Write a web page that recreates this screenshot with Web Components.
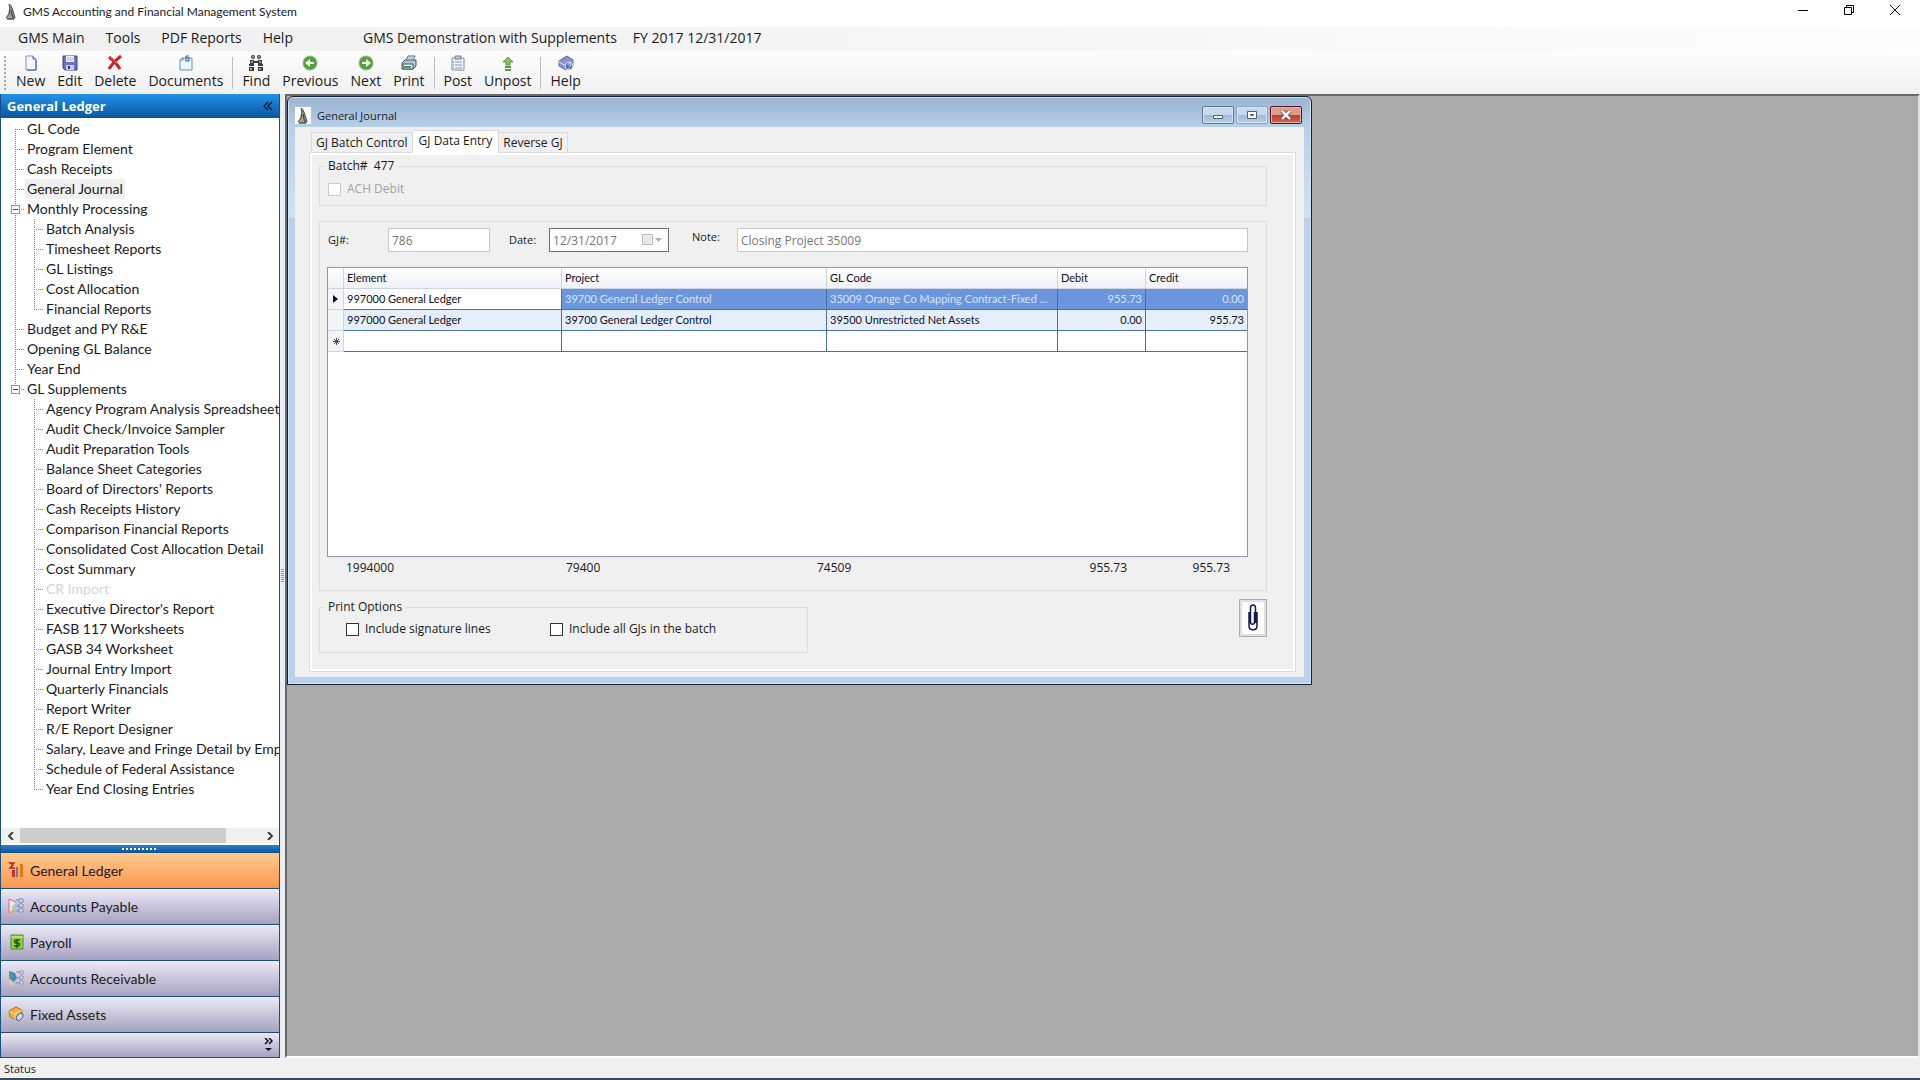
<!DOCTYPE html>
<html lang="en">
<head>
<meta charset="utf-8">
<title>GMS Accounting and Financial Management System</title>
<style>
    html, body {
        height: 100%;
        margin: 0;
    }

    body {
        font-family: "Open Sans", "Noto Sans", sans-serif;
        font-size: 12px;
        color: #1a1a1a;
        overflow: hidden;
    }
</style>
</head>
<body>
<app-shell>
    <title-bar slot="top">GMS Accounting and Financial Management System</title-bar>
    <menu-bar slot="top" company="GMS Demonstration with Supplements" period="FY 2017 12/31/2017"></menu-bar>
    <tool-bar slot="top">
        <tool-button icon="new">New</tool-button>
        <tool-button icon="edit">Edit</tool-button>
        <tool-button icon="delete">Delete</tool-button>
        <tool-button icon="documents">Documents</tool-button>
        <tool-separator></tool-separator>
        <tool-button icon="find">Find</tool-button>
        <tool-button icon="previous">Previous</tool-button>
        <tool-button icon="next">Next</tool-button>
        <tool-button icon="print">Print</tool-button>
        <tool-separator></tool-separator>
        <tool-button icon="post">Post</tool-button>
        <tool-button icon="unpost">Unpost</tool-button>
        <tool-separator></tool-separator>
        <tool-button icon="help">Help</tool-button>
    </tool-bar>

    <side-pane slot="side" heading="General Ledger">
        <tree-node label="GL Code" first></tree-node>
        <tree-node label="Program Element"></tree-node>
        <tree-node label="Cash Receipts"></tree-node>
        <tree-node label="General Journal" selected></tree-node>
        <tree-node label="Monthly Processing" branch>
            <tree-node label="Batch Analysis"></tree-node>
            <tree-node label="Timesheet Reports"></tree-node>
            <tree-node label="GL Listings"></tree-node>
            <tree-node label="Cost Allocation"></tree-node>
            <tree-node label="Financial Reports" last></tree-node>
        </tree-node>
        <tree-node label="Budget and PY R&amp;E"></tree-node>
        <tree-node label="Opening GL Balance"></tree-node>
        <tree-node label="Year End"></tree-node>
        <tree-node label="GL Supplements" branch last>
            <tree-node label="Agency Program Analysis Spreadsheet"></tree-node>
            <tree-node label="Audit Check/Invoice Sampler"></tree-node>
            <tree-node label="Audit Preparation Tools"></tree-node>
            <tree-node label="Balance Sheet Categories"></tree-node>
            <tree-node label="Board of Directors' Reports"></tree-node>
            <tree-node label="Cash Receipts History"></tree-node>
            <tree-node label="Comparison Financial Reports"></tree-node>
            <tree-node label="Consolidated Cost Allocation Detail"></tree-node>
            <tree-node label="Cost Summary"></tree-node>
            <tree-node label="CR Import" disabled></tree-node>
            <tree-node label="Executive Director's Report"></tree-node>
            <tree-node label="FASB 117 Worksheets"></tree-node>
            <tree-node label="GASB 34 Worksheet"></tree-node>
            <tree-node label="Journal Entry Import"></tree-node>
            <tree-node label="Quarterly Financials"></tree-node>
            <tree-node label="Report Writer"></tree-node>
            <tree-node label="R/E Report Designer"></tree-node>
            <tree-node label="Salary, Leave and Fringe Detail by Emp"></tree-node>
            <tree-node label="Schedule of Federal Assistance"></tree-node>
            <tree-node label="Year End Closing Entries" last></tree-node>
        </tree-node>
        <module-button slot="modules" icon="ledger" active>General Ledger</module-button>
        <module-button slot="modules" icon="payable">Accounts Payable</module-button>
        <module-button slot="modules" icon="payroll">Payroll</module-button>
        <module-button slot="modules" icon="receivable">Accounts Receivable</module-button>
        <module-button slot="modules" icon="assets">Fixed Assets</module-button>
    </side-pane>

    <mdi-window heading="General Journal">
        <tab-panel tabs="GJ Batch Control|GJ Data Entry|Reverse GJ" current="1">
            <journal-form></journal-form>
        </tab-panel>
    </mdi-window>

    <status-bar slot="bottom">Status</status-bar>
</app-shell>

<script>
const person = `<svg width="12" height="18" viewBox="0 0 12 18">
    <path d="M4 1l2 0 1 3 1 4 2 6 0 2-3 0-5 0-1-1 2-4 1-5z" fill="#a8a39c"/>
    <path d="M4 1l1 5-1 5-3 4M6 3l2 5 2 7" fill="none" stroke="#4a4642" stroke-width="1"/>
    <path d="M6 7l1 5 2 4M2 16h7" fill="none" stroke="#55504b" stroke-width="1.500"/>
</svg>`;

const icons = {
    new: `<path d="M3 1h7l3 3v11H3z" fill="#f4f8fd" stroke="#7c94b4"/><path d="M10 1v3h3" fill="#c4d4e8" stroke="#4a6690"/><path d="M13 5v10H4" fill="none" stroke="#3e5f90"/>`,
    edit: `<path d="M1 1h14v14H3l-2-2z" fill="#6a72c4" stroke="#3a4090"/><path d="M4 1h8v6H4z" fill="#eef1fa"/><path d="M5 3h6M5 5h6" stroke="#aab2d8"/><path d="M4 10h8v5H4z" fill="#c8cce8"/><path d="M6 11h2v3H6z" fill="#30367c"/>`,
    delete: `<path d="M2 2c4 3 8 7 11 12M14 1C9 5 5 9 2 14" fill="none" stroke="#c8222a" stroke-width="3"/><path d="M3 2c3 2 5 4 7 7" fill="none" stroke="#ee7070"/>`,
    documents: `<path d="M4 3h10v12H2V5z" fill="#eaf4fd" stroke="#5e92bc"/><path d="M2 5h3V3" fill="none" stroke="#5e92bc"/><path d="M11 1H8v5h3V3H9" fill="none" stroke="#2c5c86"/>`,
    find: `<g fill="#3a3a3a"><circle cx="5" cy="2" r="2"/><circle cx="11" cy="2" r="2"/><path d="M2 5h4v4H2zM10 5h4v4h-4zM6 6h4v2H6zM1 9h5v2H1zM10 9h5v2h-5zM1 12h5v4H1zM10 12h5v4h-5z"/></g><path d="M3 13v2M12 13v2M4 6v2M12 6v2" stroke="#fff"/><circle cx="5" cy="2" r="1" fill="#aaa"/><circle cx="11" cy="2" r="1" fill="#aaa"/>`,
    previous: `<circle cx="8" cy="8" r="7" fill="#54a03c" stroke="#8cbc7c"/><path d="M3 8l5-4v3h4v2H8v3z" fill="#fff"/>`,
    next: `<circle cx="8" cy="8" r="7" fill="#54a03c" stroke="#8cbc7c"/><path d="M13 8L8 4v3H4v2h4v3z" fill="#fff"/>`,
    print: `<path d="M5 6l2-5h7l-2 5z" fill="#eef6fc" stroke="#4a6a8a"/><path d="M1 8l3-3h11v6l-3 3H1z" fill="#b4c4d0" stroke="#3c5468"/><path d="M2 9h10v5H2z" fill="#e8eef2" stroke="#3c5468"/><path d="M3 12h7" stroke="#30a040" stroke-width="2"/><path d="M7 3h5" stroke="#88a8c8"/>`,
    post: `<path d="M2 3h12v12H2z" fill="#f0f5fa" stroke="#7890ac"/><path d="M5 1h6v3H5z" fill="#c0ccda" stroke="#68809c"/><path d="M5 7h7M5 10h7M5 13h7" stroke="#7c98b8"/><path d="M3 7h1M3 10h1M3 13h1" stroke="#4c6c94"/>`,
    unpost: `<path d="M8 2l5 5h-3v3H6V7H3z" fill="#86c25c" stroke="#5e9c40"/><path d="M5 12h6M5 15h6" stroke="#5c9c44" stroke-width="2"/>`,
    help: `<path d="M1 6l8-5 6 4v5l-7 5-7-4z" fill="#8a92d0" stroke="#5a62a8"/><path d="M1 7l7 4 5-3" fill="none" stroke="#eef"/><circle cx="11" cy="11" r="4" fill="#4c6cc0" stroke="#dfe6f8"/><path d="M10 10c0-2 3-2 3 0 0 1-2 1-2 2M11 13v1" fill="none" stroke="#fff"/>`,
    ledger: `<path d="M7 1H2l3 2-3 3h5" fill="none" stroke="#b82818" stroke-width="1.500"/><path d="M4 8h3v7H4z" fill="#c83020"/><path d="M8 5h2v10H8z" fill="#8070a0"/><path d="M12 2h3v13h-3z" fill="#e07818"/>`,
    payable: `<path d="M1 1l7 3v8l-7 3z" fill="#f4e4e4" stroke="#d07070"/><path d="M4 9l4-5 3 4-2 6H4z" fill="#a8c4e0"/><path d="M1 15l4-4 3 3z" fill="#f0a848"/><path d="M11 1h4v3h-4zM11 6h4v3h-4zM11 11h4v3h-4zM8 2h3M9 8h2M8 13h3" fill="#e8eef8" stroke="#7088b0"/>`,
    payroll: `<path d="M3 1h12v14H3z" fill="#98cc48" stroke="#4c8c20"/><path d="M3 3h12" stroke="#d4ecb0"/><path d="M12 6H8c-2 0-2 3 0 3h2c2 0 2 3 0 3H6M9 5v9" fill="none" stroke="#1c5c14" stroke-width="1.500"/>`,
    receivable: `<path d="M1 1l6 2 2 5-3 4-5-4z" fill="#4888b8"/><path d="M1 1l4 6-4 2z" fill="#58a078"/><path d="M1 10l5 5H1z" fill="#f0c890"/><path d="M12 1h3v3h-3zM12 6h3v3h-3zM12 11h3v3h-3zM8 2h4M9 8h3M8 13h4" fill="#f0f2f6" stroke="#8890a0"/>`,
    assets: `<path d="M1 5l7-4 6 3v6l-6 4-6-3z" fill="#f0b040" stroke="#a87018"/><path d="M1 5l6 3 7-4M7 8v6" fill="none" stroke="#fce0a0"/><path d="M9 14l-1-3 4-4 3 1v3l-4 4z" fill="#c8d4e8" stroke="#4c6490"/>`
};

function svgIcon(name) {
    return `<svg width="16" height="16" viewBox="0 0 16 16" aria-hidden="true">${icons[name]}</svg>`;
}

// every element below renders once into an open shadow root
class BaseElement extends HTMLElement {
    constructor() {
        super();
        this.myRoot = this.attachShadow({ mode: "open" });
    }

    connectedCallback() {
        this.myRoot.innerHTML = `
        <style>
            * {
                box-sizing: border-box;
            }
            button, input {
                font: inherit;
                color: inherit;
                margin: 0;
            }
            button {
                background: none;
                border: 0;
                padding: 0;
            }
            svg {
                display: block;
            }
        </style>
        ${this.render()}`;
    }
}

class AppShell extends BaseElement {
    render() {
        return `
        <style>
            :host {
                display: flex;
                flex-direction: column;
                height: 100vh;
                background: #f0f0f0;
            }
            .work {
                flex: 1;
                display: flex;
                min-height: 0;
            }
            .side {
                display: flex;
                width: 280px;
                flex: none;
            }
            .grip {
                width: 5px;
                flex: none;
                display: flex;
                align-items: center;
                justify-content: center;
                background: #e9eef5;
            }
            .grip i {
                width: 3px;
                height: 14px;
                background: repeating-linear-gradient(#8c949e 0 1px, transparent 1px 2px);
            }
            .desktop {
                flex: 1;
                position: relative;
                min-width: 0;
                background: #ababab;
                border-top: 2px solid #696969;
                border-left: 2px solid #696969;
                border-bottom: 2px solid #ffffff;
                border-right: 2px solid #e3e3e3;
            }
        </style>
        <slot name="top"></slot>
        <div class="work">
            <div class="side"><slot name="side"></slot></div>
            <div class="grip"><i></i></div>
            <main class="desktop"><slot></slot></main>
        </div>
        <slot name="bottom"></slot>`;
    }
}

class TitleBar extends BaseElement {
    render() {
        return `
        <style>
            :host {
                display: flex;
                align-items: center;
                height: 27px;
                padding: 0 2px 4px 5px;
                box-sizing: border-box;
                background: #ffffff;
                font-family: Lato, sans-serif;
                font-size: 12px;
            }
            .text {
                flex: 1;
                margin-left: 6px;
            }
            button {
                width: 46px;
                height: 20px;
                display: flex;
                justify-content: center;
            }
            button svg {
                margin-top: 2px;
            }
        </style>
        ${person}
        <span class="text"><slot></slot></span>
        <button aria-label="Minimize"><svg width="12" height="12"><path d="M1 6.500h10" stroke="#000"/></svg></button>
        <button aria-label="Restore"><svg width="12" height="12"><path d="M1.500 3.500h7v7h-7zM3.500 3V1.500h7v7H9" fill="none" stroke="#000"/></svg></button>
        <button aria-label="Close"><svg width="12" height="12"><path d="M1 1l10 10M11 1L1 11" stroke="#000"/></svg></button>`;
    }
}

class MenuBar extends BaseElement {
    render() {
        return `
        <style>
            :host {
                display: flex;
                align-items: center;
                height: 24px;
                padding: 0 0 3px 18px;
                box-sizing: border-box;
                background: linear-gradient(to right, #f0f0f0, #fcfcfc);
                font-size: 14px;
                line-height: 20px;
            }
            nav {
                display: flex;
                gap: 21px;
                margin-right: 70px;
            }
            .company {
                margin-right: 16px;
            }
        </style>
        <nav>
            <button>GMS Main</button>
            <button>Tools</button>
            <button>PDF Reports</button>
            <button>Help</button>
        </nav>
        <span class="company">${this.getAttribute("company")}</span>
        <span>${this.getAttribute("period")}</span>`;
    }
}

class ToolBar extends BaseElement {
    render() {
        return `
        <style>
            :host {
                display: flex;
                align-items: center;
                height: 43px;
                padding-left: 4px;
                box-sizing: border-box;
                background: linear-gradient(#fdfdfd, #f1f1f1);
                font-size: 14px;
            }
            .handle {
                width: 2px;
                height: 34px;
                margin-right: 4px;
                background: repeating-linear-gradient(#a8a8a8 0 2px, transparent 2px 4px);
            }
        </style>
        <i class="handle"></i>
        <slot></slot>`;
    }
}

class ToolButton extends BaseElement {
    render() {
        return `
        <style>
            :host {
                display: block;
            }
            button {
                display: flex;
                flex-direction: column;
                align-items: center;
                padding: 0 6px;
                line-height: 20px;
            }
        </style>
        <button>${svgIcon(this.getAttribute("icon"))}<span><slot></slot></span></button>`;
    }
}

class ToolSeparator extends BaseElement {
    render() {
        return `
        <style>
            :host {
                display: block;
                width: 1px;
                height: 32px;
                margin: 0 3px;
                background: #bdbdbd;
            }
        </style>`;
    }
}

class SidePane extends BaseElement {
    render() {
        return `
        <style>
            :host {
                flex: 1;
                min-width: 0;
                display: flex;
                flex-direction: column;
                border: 1px solid #1d4e80;
                border-width: 0 1px 0 1px;
                background: #1d4e80;
                font-family: Lato, sans-serif;
                font-size: 14px;
            }
            header {
                display: flex;
                align-items: center;
                justify-content: space-between;
                height: 24px;
                padding: 0 6px;
                background: linear-gradient(#2292ea, #0a559f);
                color: #ffffff;
            }
            h2 {
                margin: 0;
                font-family: "Open Sans", sans-serif;
                font-size: 13px;
                font-weight: bold;
            }
            .tree {
                flex: 1;
                min-height: 0;
                overflow: hidden;
                padding: 1px 0 0 14px;
                background: #ffffff;
            }
            .scroll {
                display: flex;
                height: 15px;
                background: #f0f0f0;
            }
            .scroll button {
                width: 19px;
                display: flex;
                align-items: center;
                justify-content: center;
            }
            .track {
                flex: 1;
            }
            .thumb {
                width: 86%;
                height: 15px;
                background: #cdcdcd;
            }
            .splitter {
                height: 9px;
                display: flex;
                align-items: center;
                justify-content: center;
                border-top: 2px solid #ffffff;
                background: linear-gradient(#2a80cc, #0d5ba8);
            }
            .splitter i {
                width: 36px;
                height: 2px;
                background: repeating-linear-gradient(to right, #ffffff 0 2px, transparent 2px 4px);
            }
            .more {
                display: flex;
                justify-content: flex-end;
                align-items: center;
                height: 24px;
                margin: 1px 0;
                padding-right: 6px;
                background: linear-gradient(#eceaf6, #a5a1c0);
            }
        </style>
        <header>
            <h2>${this.getAttribute("heading")}</h2>
            <button aria-label="Collapse"><svg width="10" height="10"><path d="M5 1L1 5l4 4M9 1L5 5l4 4" fill="none" stroke="#0a1a33" stroke-width="1.500"/></svg></button>
        </header>
        <div class="tree"><slot></slot></div>
        <div class="scroll">
            <button aria-label="Scroll left"><svg width="8" height="8"><path d="M6 0L2 4l4 4" fill="none" stroke="#404040" stroke-width="2"/></svg></button>
            <div class="track"><div class="thumb"></div></div>
            <button aria-label="Scroll right"><svg width="8" height="8"><path d="M2 0l4 4-4 4" fill="none" stroke="#404040" stroke-width="2"/></svg></button>
        </div>
        <div class="splitter"><i></i></div>
        <slot name="modules"></slot>
        <div class="more">
            <button aria-label="Configure buttons"><svg width="9" height="14"><path d="M1 0l3 3-3 3M5 0l3 3-3 3" fill="none" stroke="#0a0a1e" stroke-width="1.500"/><path d="M1 10h7l-3.500 3z" fill="#0a0a1e"/></svg></button>
        </div>`;
    }
}

class TreeNode extends BaseElement {
    render() {
        const first = this.hasAttribute("first");
        const last = this.hasAttribute("last");
        const branch = this.hasAttribute("branch");
        return `
        <style>
            :host {
                display: block;
                --dots: repeating-linear-gradient(#7d8794 0 1px, transparent 1px 2px);
                --dash: repeating-linear-gradient(to right, #7d8794 0 1px, transparent 1px 2px);
            }
            .row {
                display: flex;
                align-items: center;
                height: 20px;
            }
            .guide {
                position: relative;
                flex: none;
                width: 10px;
                height: 20px;
                background: var(--dots) 0 ${first ? "100%" : "0"} / 1px ${first || last ? "50%" : "100%"} no-repeat, var(--dash) 0 50% / 9px 1px no-repeat;
            }
            /* the box sits on the line it folds */
            .guide button {
                position: absolute;
                left: -4px;
                top: 6px;
                width: 9px;
                height: 9px;
                background: #ffffff;
                border: 1px solid #8c96a8;
            }
            .guide button::before {
                content: "";
                display: block;
                height: 1px;
                margin: 0 1px;
                background: #30507c;
            }
            a {
                padding: 0 2px;
                line-height: 20px;
                white-space: nowrap;
                color: inherit;
                text-decoration: none;
            }
            :host([selected]) a {
                background: #f0f0f0;
            }
            :host([disabled]) a {
                color: #d5d5d5;
            }
            .kids {
                padding-left: 19px;
                ${branch && !last ? "background: var(--dots) 0 0 / 1px 100% no-repeat;" : ""}
            }
        </style>
        <div class="row">
            <span class="guide">${branch ? `<button aria-label="Collapse ${this.getAttribute("label")}"></button>` : ""}</span>
            <a href="#"></a>
        </div>
        <div class="kids"><slot></slot></div>`;
    }

    connectedCallback() {
        super.connectedCallback();
        this.myRoot.querySelector("a").textContent = this.getAttribute("label");
    }
}

class ModuleButton extends BaseElement {
    render() {
        return `
        <style>
            :host {
                display: block;
                margin-top: 1px;
            }
            button {
                display: flex;
                align-items: center;
                gap: 6px;
                width: 100%;
                height: 35px;
                padding: 0 7px 1px;
                background: linear-gradient(#eceaf6, #a5a1c0);
            }
            :host([active]) button {
                background: linear-gradient(#ffcb8c, #fb9651);
            }
        </style>
        <button>${svgIcon(this.getAttribute("icon"))}<span><slot></slot></span></button>`;
    }
}

class MdiWindow extends BaseElement {
    render() {
        return `
        <style>
            /* free-floating child window on the desktop area */
            :host {
                position: absolute;
                left: 0;
                top: 0;
                display: flex;
                flex-direction: column;
                width: min(1025px, 100%);
                box-sizing: border-box;
                border: 1px solid #10202c;
                border-radius: 6px 6px 0 0;
                padding: 0 7px 7px;
                background: linear-gradient(#9ab4d1, #b6cfea 30px, #cfe2f4 120px, #b9d1ea 121px);
                box-shadow: inset 0 0 0 1px #cfe4f4;
            }
            header {
                display: flex;
                align-items: center;
                gap: 6px;
                height: 30px;
                padding-top: 6px;
            }
            .badge {
                display: flex;
                justify-content: center;
                width: 16px;
                height: 17px;
                background: #ffffff;
            }
            h1 {
                flex: 1;
                margin: 0;
                font-size: 11px;
                font-weight: normal;
            }
            header div {
                display: flex;
                gap: 2px;
                padding-right: 2px;
            }
            button {
                display: flex;
                align-items: center;
                justify-content: center;
                width: 32px;
                height: 18px;
                border: 1px solid #5c7690;
                border-radius: 2px;
                background: linear-gradient(#c6d8ec 50%, #a3bbd6 50%, #b7cde6);
                box-shadow: inset 0 0 0 1px #d8e6f4;
            }
            button.max {
                border-color: #8ba4c0;
            }
            button.close {
                border-color: #58161c;
                background: linear-gradient(#dd9a8e 50%, #bb3d2c 50%, #cf6450);
                box-shadow: inset 0 0 0 1px #e8b0a4;
            }
            .body {
                background: #f0f0f0;
                padding: 3px 8px 5px 14px;
            }
        </style>
        <header>
            <span class="badge">${person}</span>
            <h1>${this.getAttribute("heading")}</h1>
            <div>
                <button aria-label="Minimize window"><svg width="12" height="12"><path d="M1.500 6.500h9v3h-9z" fill="#fff" stroke="#53606e"/></svg></button>
                <button class="max" aria-label="Maximize window"><svg width="12" height="10"><path d="M1.500 1.500h9v7h-9zM4.500 4.500h3v1h-3z" fill="#fff" stroke="#53606e"/></svg></button>
                <button class="close" aria-label="Close window"><svg width="12" height="10"><path d="M2 1l8 8M10 1L2 9" stroke="#5a3030" stroke-width="4"/><path d="M2 1l8 8M10 1L2 9" stroke="#fff" stroke-width="2.500"/></svg></button>
            </div>
        </header>
        <div class="body"><slot></slot></div>`;
    }
}

class TabPanel extends BaseElement {
    render() {
        const current = Number(this.getAttribute("current"));
        const tabs = this.getAttribute("tabs").split("|").map((name, i) =>
            `<button role="tab" aria-selected="${i === current}">${name}</button>`).join("");
        return `
        <style>
            :host {
                display: block;
            }
            [role=tablist] {
                display: flex;
                align-items: flex-end;
                height: 22px;
                padding-left: 2px;
            }
            [role=tab] {
                height: 20px;
                padding: 0 4px;
                border: 1px solid #d9d9d9;
                border-width: 1px 1px 0 0;
                line-height: 18px;
            }
            [role=tab]:first-child {
                border-left-width: 1px;
            }
            [aria-selected=true] {
                height: 23px;
                margin-bottom: -1px;
                padding: 0 6px 3px;
                background: #ffffff;
            }
            .page {
                border: 1px solid #dcdcdc;
                box-shadow: inset 0 0 0 2px #ffffff;
                padding: 5px 28px 18px 9px;
            }
        </style>
        <div role="tablist">${tabs}</div>
        <div class="page" role="tabpanel"><slot></slot></div>`;
    }
}

class JournalForm extends BaseElement {
    render() {
        const totals = ["1994000", "79400", "74509", "955.73", "955.73"];
        return `
        <style>
            :host {
                display: flex;
                flex-direction: column;
                font-size: 12px;
            }
            fieldset {
                margin: 0;
                padding: 0 8px;
                border: 1px solid #dcdcdc;
                min-width: 0;
            }
            legend {
                padding: 0 3px;
                margin-left: -3px;
                line-height: 16px;
                white-space: pre;
            }
            label {
                display: inline-flex;
                align-items: center;
                gap: 6px;
                line-height: 16px;
            }
            input[type=checkbox] {
                appearance: none;
                width: 13px;
                height: 13px;
                border: 1px solid #333333;
                background: #ffffff;
            }
            .batch {
                height: 48px;
            }
            .batch label {
                padding-top: 7px;
                color: #a3a3a3;
            }
            .batch input[type=checkbox] {
                border-color: #cccccc;
            }
            .entry {
                margin-top: 15px;
                padding: 6px 18px 12px 7px;
                border: 1px solid #dcdcdc;
            }
            .fields {
                display: flex;
                align-items: center;
                height: 24px;
                margin-bottom: 15px;
            }
            .fields label {
                padding-left: 1px;
                font-size: 11px;
            }
            .fields label[for=note] {
                padding-bottom: 6px;
            }
            .box {
                height: 24px;
                padding: 0 3px;
                border: 1px solid #c8c8c8;
                border-radius: 0;
                background: #ffffff;
                color: #767676;
            }
            .number {
                width: 102px;
                margin: 0 18px 0 39px;
            }
            .date {
                display: flex;
                align-items: center;
                width: 120px;
                margin: 0 22px 0 13px;
                border-color: #6e6e6e;
            }
            .date input {
                width: 88px;
                border: 0;
                padding: 0;
                background: none;
            }
            .note {
                flex: 1;
                min-width: 0;
                margin-left: 17px;
            }
            .totals {
                display: grid;
                grid-template-columns: 220px 251px 1fr 103px 103px;
                padding: 1px 18px 0 19px;
                line-height: 20px;
            }
            .totals span:nth-child(n+4) {
                text-align: right;
            }
            .foot {
                display: flex;
                justify-content: space-between;
                align-items: flex-start;
                margin-top: 8px;
            }
            .print {
                width: 489px;
                height: 54px;
            }
            .print div {
                display: grid;
                grid-template-columns: 204px 1fr;
                padding: 6px 0 0 18px;
            }
            .clip {
                display: flex;
                align-items: center;
                justify-content: center;
                width: 28px;
                height: 38px;
                border: 1px solid #adadad;
                background: #ffffff;
                box-shadow: inset 0 0 0 2px #e1e1e1;
            }
        </style>
        <fieldset class="batch">
            <legend>Batch#  477</legend>
            <label><input type="checkbox" disabled>ACH Debit</label>
        </fieldset>
        <section class="entry">
            <div class="fields">
                <label for="gj">GJ#:</label>
                <input class="box number" id="gj" value="786" disabled>
                <label for="date">Date:</label>
                <span class="box date">
                    <input id="date" value="12/31/2017" disabled>
                    <button aria-label="Open calendar" disabled><svg width="22" height="14"><path d="M1.500 1.500h10v10h-10z" fill="#f4f4f4" stroke="#b4b4b4"/><path d="M3 4h7M3 6h7M3 8h7M3 10h5" stroke="#dadada"/><path d="M14 5h7l-3.500 4z" fill="#b0b0b0"/></svg></button>
                </span>
                <label for="note">Note:</label>
                <input class="box note" id="note" value="Closing Project 35009" disabled>
            </div>
            <journal-grid></journal-grid>
            <div class="totals">${totals.map(t => `<span>${t}</span>`).join("")}</div>
        </section>
        <div class="foot">
            <fieldset class="print">
                <legend>Print Options</legend>
                <div>
                    <label><input type="checkbox">Include signature lines</label>
                    <label><input type="checkbox">Include all GJs in the batch</label>
                </div>
            </fieldset>
            <button class="clip" aria-label="Attachments"><svg width="12" height="28"><path d="M2 8v14c0 5 8 5 8 0V8M8.500 19V4c0-4-5-4-5 0v14c0 3 4 3 4 0V8" fill="none" stroke="#14184c" stroke-width="1.500"/></svg></button>
        </div>`;
    }
}

const entries = [
    { element: "997000 General Ledger", project: "39700 General Ledger Control", code: "35009 Orange Co Mapping Contract-Fixed ...", debit: "955.73", credit: "0.00" },
    { element: "997000 General Ledger", project: "39700 General Ledger Control", code: "39500 Unrestricted Net Assets", debit: "0.00", credit: "955.73" }
];

class JournalGrid extends BaseElement {
    render() {
        let rows = "";
        for (let e of entries) {
            const current = e === entries[0];
            rows += `
            <tr class="${current ? "current" : "other"}">
                <th>${current ? `<svg width="5" height="8"><path d="M0 0l5 4-5 4z" fill="#10101c"/></svg>` : ""}</th>
                <td>${e.element}</td><td>${e.project}</td><td>${e.code}</td>
                <td class="num">${e.debit}</td><td class="num">${e.credit}</td>
            </tr>`;
        }
        return `
        <style>
            :host {
                display: block;
                min-height: 290px;
                box-sizing: border-box;
                border: 1px solid #8c95a3;
                background: #ffffff;
                font-family: Lato, sans-serif;
                font-size: 11px;
                color: #10101c;
            }
            table {
                width: 100%;
                table-layout: fixed;
                border-collapse: separate;
                border-spacing: 0;
            }
            th, td {
                height: 21px;
                padding: 0 3px 2px;
                border-right: 1px solid #4d7299;
                border-bottom: 1px solid #4d7299;
                text-align: left;
                font-weight: normal;
                white-space: nowrap;
                overflow: hidden;
            }
            thead th {
                background: linear-gradient(#ffffff, #f0f2f7);
                border-color: #cfd5de;
            }
            th:last-child, td:last-child {
                border-right: 0;
            }
            tbody th {
                padding: 0 5px;
                background: #f3f5f9;
                border-color: #cfd5de;
            }
            td.num {
                text-align: right;
            }
            .other td {
                background: #e5effb;
            }
            .current td:nth-child(n+3) {
                background: #6b96de;
                color: #d5e4fa;
            }
        </style>
        <table>
            <colgroup>
                <col style="width: 16px"><col style="width: 218px"><col style="width: 265px">
                <col><col style="width: 88px"><col style="width: 101px">
            </colgroup>
            <thead>
                <tr><th></th><th>Element</th><th>Project</th><th>GL Code</th><th>Debit</th><th>Credit</th></tr>
            </thead>
            <tbody>
                ${rows}
                <tr>
                    <th><svg width="7" height="7"><path d="M3.500 0v7M0 3.500h7M1 1l5 5M6 1L1 6" stroke="#50505c"/></svg></th>
                    <td></td><td></td><td></td><td></td><td></td>
                </tr>
            </tbody>
        </table>`;
    }
}

class StatusBar extends BaseElement {
    render() {
        return `
        <style>
            :host {
                display: block;
                height: 22px;
                box-sizing: border-box;
                padding-left: 4px;
                border-bottom: 2px solid #3b4a63;
                background: #f0f0f0;
                font-size: 11px;
                line-height: 22px;
            }
        </style>
        <slot></slot>`;
    }
}

window.customElements.define("app-shell", AppShell);
window.customElements.define("title-bar", TitleBar);
window.customElements.define("menu-bar", MenuBar);
window.customElements.define("tool-bar", ToolBar);
window.customElements.define("tool-button", ToolButton);
window.customElements.define("tool-separator", ToolSeparator);
window.customElements.define("side-pane", SidePane);
window.customElements.define("tree-node", TreeNode);
window.customElements.define("module-button", ModuleButton);
window.customElements.define("mdi-window", MdiWindow);
window.customElements.define("tab-panel", TabPanel);
window.customElements.define("journal-form", JournalForm);
window.customElements.define("journal-grid", JournalGrid);
window.customElements.define("status-bar", StatusBar);
</script>
</body>
</html>
